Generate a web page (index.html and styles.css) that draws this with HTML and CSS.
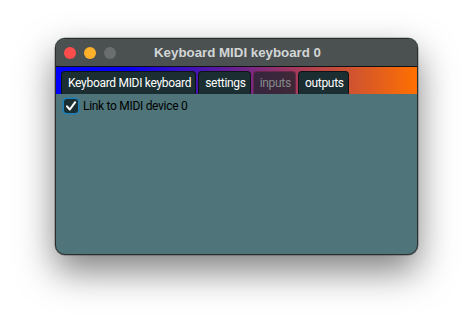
FILE: index.html
```html
<!DOCTYPE html>
<html>
<head>
<meta charset="utf-8">
<link rel="stylesheet" href="styles.css">
</head>
<body>
<div class="window">
  <div class="titlebar">
    <div class="lights">
      <span class="light red"></span>
      <span class="light yellow"></span>
      <span class="light grey"></span>
    </div>
    <div class="title">Keyboard MIDI keyboard 0</div>
  </div>
  <div class="tabstrip">
    <div class="tab">Keyboard MIDI keyboard</div>
    <div class="tab">settings</div>
    <div class="tab disabled">inputs</div>
    <div class="tab">outputs</div>
  </div>
  <div class="content">
    <label class="check-row">
      <span class="checkbox">
        <svg width="12" height="12" viewBox="0 0 12 12"><path d="M2 6.3 L4.8 9.5 L10.2 2.2" fill="none" stroke="#fff" stroke-width="2" stroke-linecap="round" stroke-linejoin="round"/></svg>
      </span>
      <span class="check-label">Link to MIDI device 0</span>
    </label>
  </div>
</div>
</body>
</html>
```
FILE: styles.css
```css
html, body {
  margin: 0;
  padding: 0;
  background: #ffffff;
}
body {
  min-height: 329px;
  box-sizing: border-box;
  padding: 38px 0 0 55px;
  font-family: Roboto, "Liberation Sans", Arial, sans-serif;
  font-size: 12px;
  letter-spacing: -0.3px;
}
.window {
  width: 363px;
  height: 217px;
  box-sizing: border-box;
  border-radius: 10px;
  overflow: hidden;
  background: #4f757a;
  border: 1px solid #2a2e2e;
  box-shadow: 0 16px 36px rgba(0,0,0,0.5), 0 0 0 0.5px rgba(0,0,0,0.4);
  display: flex;
  flex-direction: column;
}
.titlebar {
  height: 27px;
  flex: none;
  background: #4b5151;
  border-bottom: 1px solid #111;
  display: flex;
  align-items: center;
  position: relative;
}
.lights {
  display: flex;
  gap: 8px;
  padding-left: 8px;
  position: absolute;
  left: 0;
  top: 8px;
}
.light {
  width: 12px;
  height: 12px;
  border-radius: 50%;
  display: block;
}
.red { background: #fe4d4a; }
.yellow { background: #fdb02a; }
.grey { background: #6a6e6e; }
.title {
  flex: 1;
  text-align: center;
  color: #d3d6d6;
  font-family: "Liberation Sans", Arial, sans-serif;
  font-weight: bold;
  font-size: 13.3px;
  letter-spacing: 0;
  padding-left: 2px;
}
.tabstrip {
  height: 27px;
  flex: none;
  background: linear-gradient(to right, #0000ff 0%, #0a00f0 20%, #5a1aa0 45%, #b04050 70%, #ff7000 100%);
  display: flex;
  align-items: flex-end;
  gap: 2px;
  padding-left: 5px;
  box-sizing: border-box;
}
.tab {
  height: 23px;
  box-sizing: border-box;
  padding: 0 4px 0 6px;
  display: flex;
  align-items: center;
  background: #1b2e32;
  color: #ffffff;
  border: 1px solid #0c1416;
  border-bottom: none;
  border-radius: 4px 4px 0 0;
  white-space: nowrap;
}
.tab.disabled {
  background: rgba(38,36,46,0.8);
  color: #858a8c;
  border-color: rgba(120,40,80,0.7);
}
.content {
  flex: 1;
  padding: 4px 6px;
}
.check-row {
  display: flex;
  align-items: center;
  gap: 5px;
  color: #000;
}
.checkbox {
  width: 14px;
  height: 14px;
  box-sizing: border-box;
  background: #1b2e32;
  border-radius: 3px;
  box-shadow: 0 0 0 1.5px #1d7fb8;
  display: flex;
  align-items: center;
  justify-content: center;
  margin-left: 2px;
}
.check-label {
  line-height: 16px;
}
```
